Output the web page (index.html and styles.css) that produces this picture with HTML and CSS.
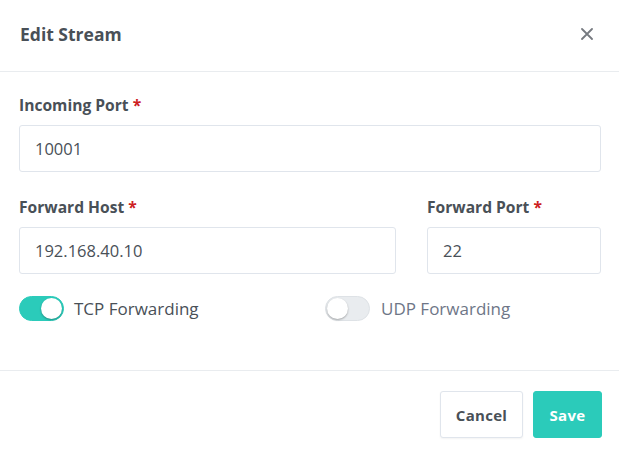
FILE: index.html
```html
<!DOCTYPE html>
<html>
<head>
<meta charset="utf-8">
<link rel="stylesheet" href="styles.css">
</head>
<body>
<div class="modal">
  <div class="modal-header">
    <h5 class="modal-title">Edit Stream</h5>
    <button class="close" aria-label="Close">
      <svg width="12" height="12" viewBox="0 0 12 12"><path d="M1 1 L11 11 M11 1 L1 11" stroke="#767a80" stroke-width="1.8" stroke-linecap="round"/></svg>
    </button>
  </div>
  <div class="modal-body">
    <div class="form-group first">
      <label class="form-label">Incoming Port <span class="req">*</span></label>
      <div class="form-control">10001</div>
    </div>
    <div class="row">
      <div class="form-group">
        <label class="form-label">Forward Host <span class="req">*</span></label>
        <div class="form-control">192.168.40.10</div>
      </div>
      <div class="form-group">
        <label class="form-label">Forward Port <span class="req">*</span></label>
        <div class="form-control">22</div>
      </div>
    </div>
    <div class="row toggles">
      <label class="switch on"><span class="track"><span class="knob"></span></span><span class="switch-label">TCP Forwarding</span></label>
      <label class="switch off"><span class="track"><span class="knob"></span></span><span class="switch-label">UDP Forwarding</span></label>
    </div>
  </div>
  <div class="modal-footer">
    <button class="btn btn-secondary">Cancel</button>
    <button class="btn btn-teal">Save</button>
  </div>
</div>
</body>
</html>
```
FILE: styles.css
```css
* { box-sizing: border-box; }
html, body { margin: 0; padding: 0; background: #fff; }
body {
  font-family: "Open Sans", "Liberation Sans", sans-serif;
  color: #495057;
  font-size: 16px;
}
.modal { width: 619px; }
.modal-header {
  display: flex;
  align-items: center;
  justify-content: space-between;
  height: 72px;
  padding: 0 20px;
  border-bottom: 1px solid #e9ecef;
}
.modal-title {
  margin: 0;
  font-size: 17.5px;
  font-weight: 700;
  color: #495057;
  position: relative;
  top: -2px;
}
.close {
  background: none;
  border: 0;
  padding: 0;
  width: 12px;
  height: 12px;
  margin-right: 6px;
  position: relative;
  top: -2px;
  cursor: pointer;
}
.close svg { display: block; }
.modal-body { padding: 21px 18px 49px 19px; }
.form-group { margin-bottom: 22px; }
.form-group.first { margin-bottom: 23px; }
.form-label {
  display: block;
  font-weight: 700;
  font-size: 15.6px;
  line-height: 24px;
  margin-bottom: 8px;
  color: #495057;
}
.req { color: #cd201f; }
.form-control {
  height: 47px;
  border: 1px solid #e0e5ec;
  border-radius: 3px;
  padding: 0 15px;
  display: flex;
  align-items: center;
  font-size: 16.5px;
  color: #495057;
}
.row {
  display: grid;
  grid-template-columns: 1fr 174px;
  column-gap: 31px;
}
.toggles { grid-template-columns: 306px 1fr; column-gap: 0; }
.switch {
  display: flex;
  align-items: center;
  height: 25px;
}
.track {
  width: 45px;
  height: 25px;
  border-radius: 13px;
  position: relative;
  border: 1px solid #dee2e6;
  background: #e9ecef;
  flex: none;
}
.knob {
  position: absolute;
  top: 1px;
  left: 1px;
  width: 21px;
  height: 21px;
  border-radius: 50%;
  background: #fff;
  box-shadow: 0 1px 2px rgba(0,0,0,0.3);
}
.switch.on .track { background: #2bcbba; border-color: #2bcbba; }
.switch.on .knob { left: 21px; }
.switch-label { margin-left: 10px; font-size: 17px; color: #495057; }
.switch.off .switch-label { color: #6e7687; margin-left: 11px; }
.modal-footer {
  border-top: 1px solid #e9ecef;
  display: flex;
  justify-content: flex-end;
  padding: 20px 17px 20px 20px;
  gap: 10px;
}
.btn {
  font-family: inherit;
  font-size: 15px;
  font-weight: 700;
  height: 47px;
  border-radius: 3px;
  letter-spacing: 0.3px;
  padding: 0;
}
.btn-secondary {
  background: #fff;
  border: 1px solid #e0e5ec;
  color: #495057;
  width: 83px;
  box-shadow: 0 1px 2px rgba(0,0,0,0.05);
}
.btn-teal {
  background: #2bcbba;
  border: 1px solid #2bcbba;
  color: #fff;
  width: 69px;
}
```
